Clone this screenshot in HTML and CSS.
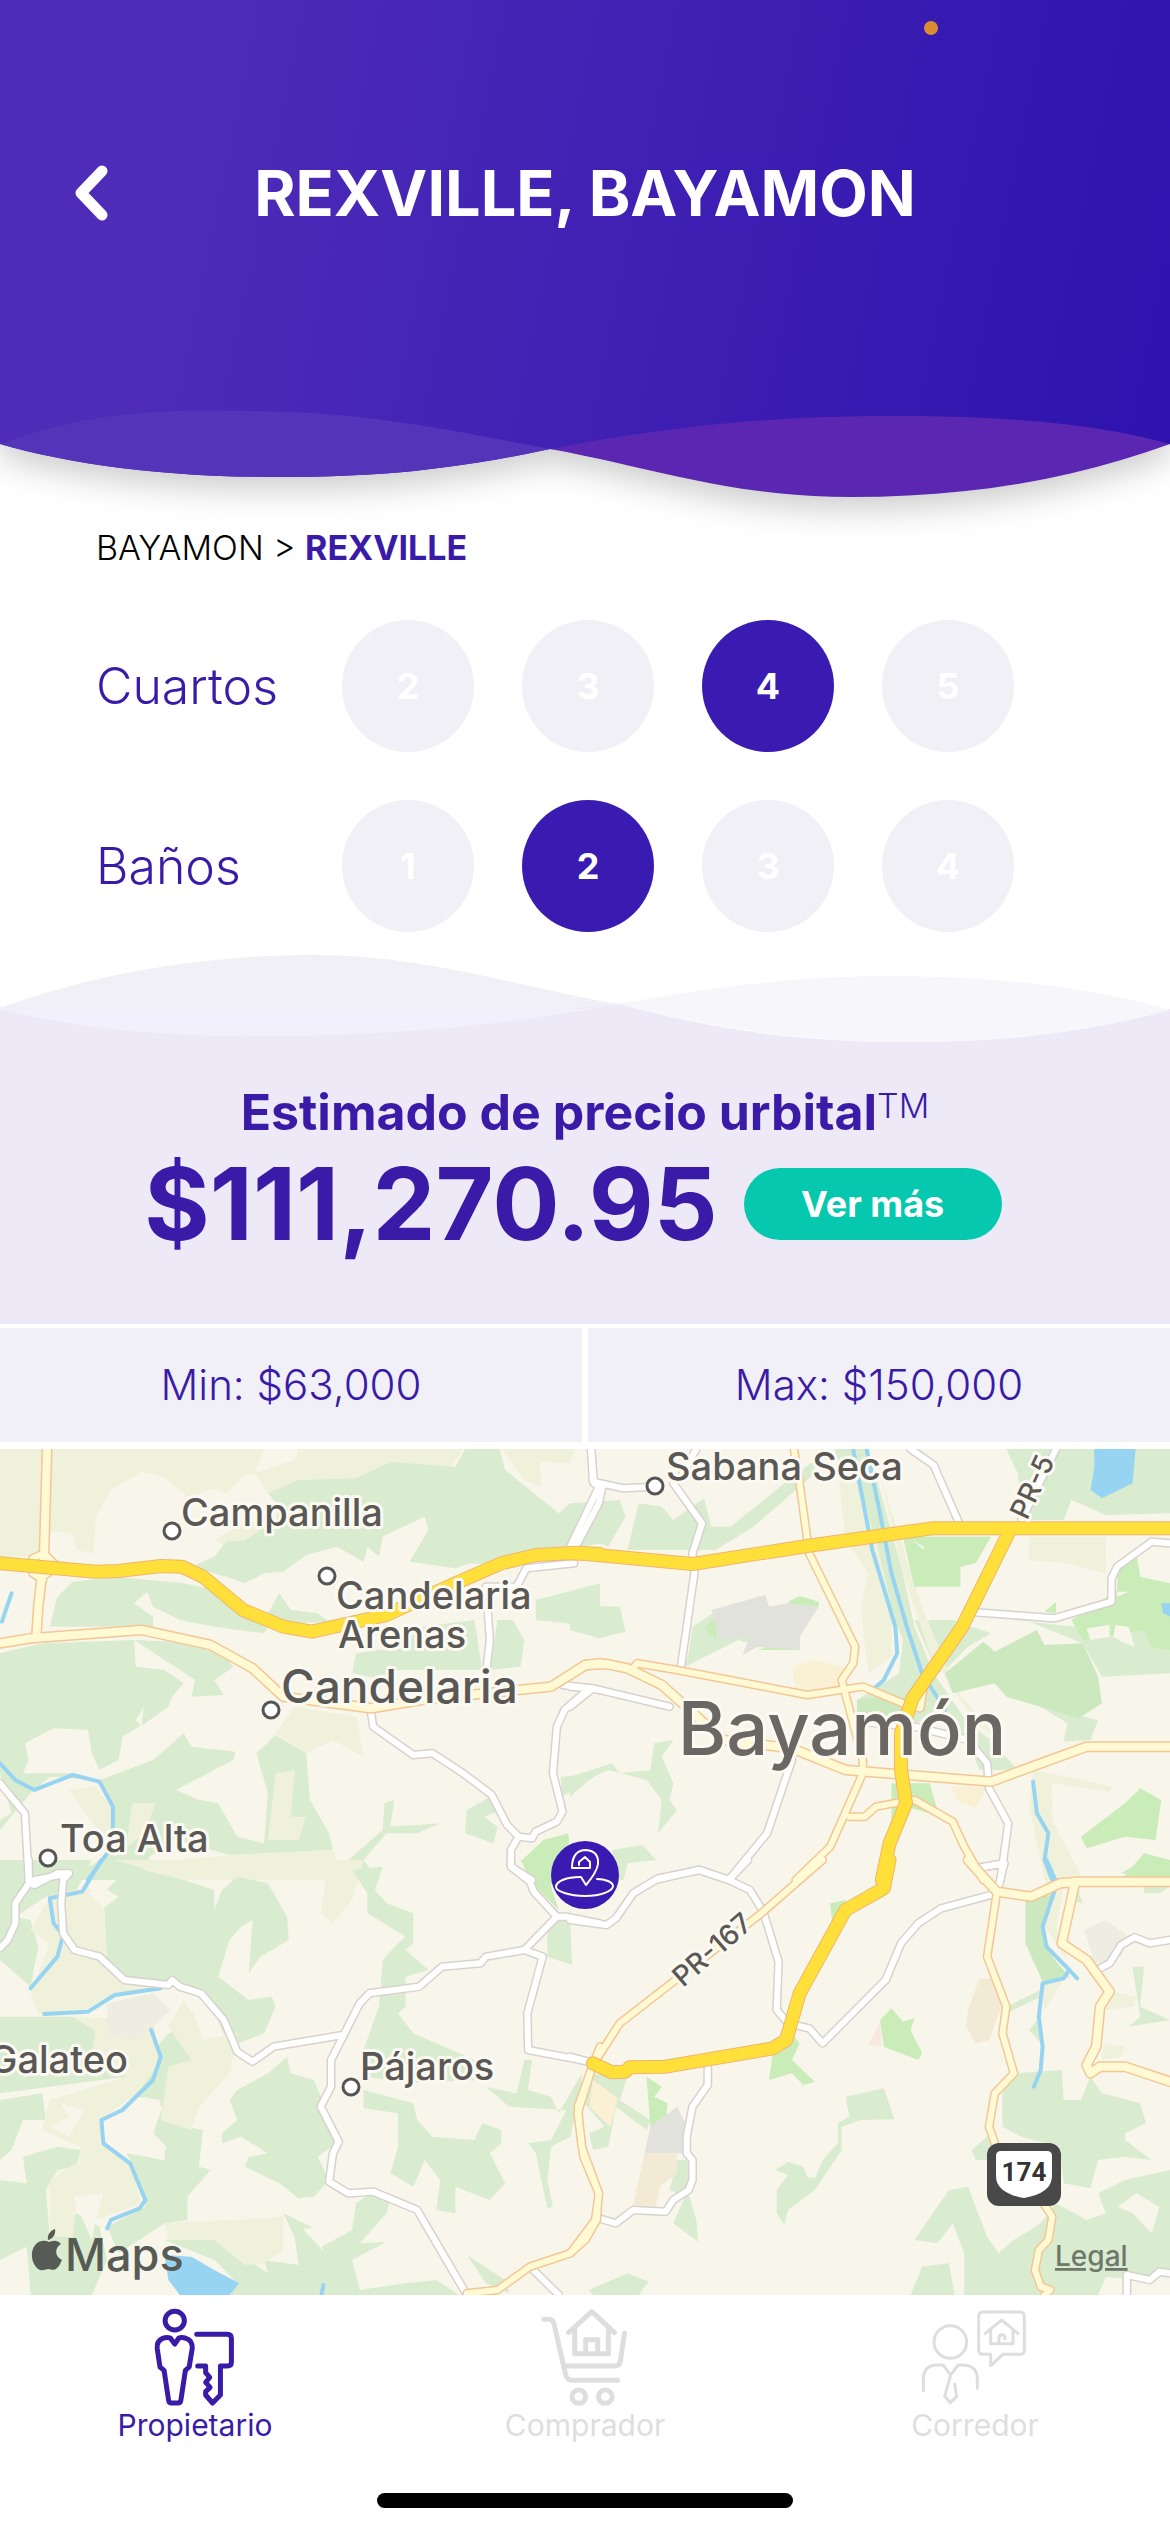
FILE: index.html
```html
<!DOCTYPE html>
<html lang="es">
<head>
<meta charset="utf-8">
<meta name="viewport" content="width=device-width, initial-scale=1">
<title>Rexville, Bayamon</title>
<link rel="stylesheet" href="styles.css">
</head>
<body>
<div class="app">
  <header class="hero">
    <svg class="hero-art" viewBox="0 0 1170 500" preserveAspectRatio="none" aria-hidden="true">
      <defs>
        <linearGradient id="heroFill" gradientUnits="userSpaceOnUse" x1="180" y1="100" x2="1170" y2="300">
          <stop offset="0" stop-color="#4e2cb8"/><stop offset="1" stop-color="#2e13ae"/>
        </linearGradient>
      </defs>
      <path fill="url(#heroFill)" d="M0 0H1170V444L851 470L550 449C450 470 380 477 276 477C160 477 70 464 0 444Z"/>
      <path fill="#5434b8" d="M0 444C100 407 180 410 257 411C370 412 460 432 550 449C450 470 380 477 276 477C160 477 70 464 0 444Z"/>
      <path fill="#5b27b2" d="M550 449C680 424 780 416 895 416C1010 416 1100 424 1170 444C1070 480 970 497 851 497C730 497 650 467 550 449Z"/>
    </svg>
    <span class="recording-dot"></span>
    <div class="hero-bar">
      <button class="back" type="button" aria-label="Volver">
        <svg width="34" height="56" viewBox="0 0 34 56"><path d="M28 6L7 28L28 50" fill="none" stroke="#fff" stroke-width="11" stroke-linecap="round" stroke-linejoin="round"/></svg>
      </button>
      <h1>REXVILLE, BAYAMON</h1>
    </div>
  </header>

  <main>
    <section class="filters">
      <nav class="crumbs" aria-label="Ruta"><a href="#bayamon">BAYAMON</a> &gt; <a class="here" href="#rexville">REXVILLE</a></nav>
      <div class="choice" role="radiogroup" aria-labelledby="cuartos-name">
        <span class="choice-name" id="cuartos-name">Cuartos</span>
        <label><input type="radio" name="cuartos"><span>2</span></label>
        <label><input type="radio" name="cuartos"><span>3</span></label>
        <label><input type="radio" name="cuartos" checked><span>4</span></label>
        <label><input type="radio" name="cuartos"><span>5</span></label>
      </div>
      <div class="choice" role="radiogroup" aria-labelledby="banos-name">
        <span class="choice-name" id="banos-name">Baños</span>
        <label><input type="radio" name="banos"><span>1</span></label>
        <label><input type="radio" name="banos" checked><span>2</span></label>
        <label><input type="radio" name="banos"><span>3</span></label>
        <label><input type="radio" name="banos"><span>4</span></label>
      </div>
    </section>

    <svg class="wave" viewBox="0 0 1170 92" preserveAspectRatio="none" aria-hidden="true">
      <path fill="#ede9f7" d="M0 55H560L620 52C720 80 810 90 907 90C1010 90 1090 80 1170 57V92H0Z"/>
      <path fill="#f1f0f7" d="M0 56C110 16 220 3 313 3C430 3 530 38 618 52L560 58H0Z"/>
      <path fill="#f3f0fd" d="M0 57H585L618 52C490 76 380 84 261 84C150 84 70 75 0 57Z"/>
      <path fill="#f7f6fb" d="M618 52C720 33 810 24 888 24C1010 24 1100 38 1170 58C1090 80 1000 90 907 90C810 90 720 78 618 52Z"/>
    </svg>

    <section class="estimate">
      <h2>Estimado de precio urbital<span>TM</span></h2>
      <div class="price-row">
        <strong>$111,270.95</strong>
        <button type="button" class="more">Ver más</button>
      </div>
    </section>

    <div class="range">
      <p>Min: $63,000</p>
      <p>Max: $150,000</p>
    </div>

    <section class="map" aria-label="Mapa">
      <svg viewBox="0 0 1170 846">
        <defs>
          <g id="minor">
            <path transform="translate(0 -9) scale(.3827 .3333)" d="M0 1030L65 1120 75 1320M1545 27L1552 130 1565 140 1490 320M1500 370L1375 385 1350 440 1270 440 1280 600 1270 700M970 820L975 860 1080 945 1130 940 1210 1000 1285 1065 1325 1155 1355 1190 1390 1195 1400 1175 1455 1145 1470 1115 1445 1000 1455 860 1475 810 1540 745 1470 735M1540 745L1568 750M1355 1190L1335 1230V1280L1390 1320M90 1320L180 1300"/>
            <path transform="translate(570 -9) scale(.3827 .3333)" d="M55 27L60 125 140 145 220 140M85 140L75 190 20 310 0 330M330 27L290 110M270 130L345 250 320 340 325 400 305 560 290 680M890 27L950 75 1015 245M1270 27L1180 240M1040 515L1265 535 1415 485V415L1430 380 1520 305 1568 310M0 740L60 745 260 800M60 745L0 800M580 960L515 1180 415 1320M225 1320L335 1290 415 1320M750 845L900 860 1040 900 1090 970 1095 1045 1145 1150 1125 1320M1060 1285L1135 1270"/>
            <path transform="translate(0 411) scale(.3827 .3333)" d="M75 0V70L40 130V190L20 240 0 265M75 70L90 75 150 40H180L165 60 160 130 165 220 195 270 260 290 325 360 440 375 450 360 470 380 525 400 585 480 620 575 660 605 715 560 895 525M1335 0V20L1385 65 1395 95 1455 170 1370 270 1270 290 1255 310 1155 320 1095 380 965 400 940 430 865 600V680L838 740 885 845 870 880 860 965 910 1000 975 995 1090 1050 1220 1305M1370 270L1418 290 1378 460 1380 570 1540 605M1455 170L1480 170 1568 190M1385 1220L1460 1305"/>
            <path transform="translate(570 411) scale(.3827 .3333)" d="M0 180L95 195 120 175 165 100 230 55 340 30 415 60 470 90 505 155 545 305 540 450 570 490 625 505 660 550 825 360 865 250 910 190 970 145 1115 100M415 60L465 0M1060 25L1135 10 1115 100M1385 325L1410 310 1440 255 1475 232 1515 250 1568 240M0 590L60 610M360 625V675L320 740 305 830V880L320 900V960L310 990 270 1020 250 1055 165 1050 120 1090 75 1075M1455 1305V1245L1515 1260 1540 1235 1568 1240"/>
          </g>
          <g id="secondary">
            <path transform="translate(0 -9) scale(.3827 .3333)" d="M0 610L80 595 370 570 550 615 660 685 740 770 870 790 970 805 1100 780 1440 740 1530 675 1568 670M123 27L115 350 100 500 95 590"/>
            <path transform="translate(570 -9) scale(.3827 .3333)" d="M0 705L40 675 95 672 150 685 240 735 400 900 580 925 720 990 1100 1025 1350 920H1568"/>
            <path transform="translate(570 411) scale(.3827 .3333)" d="M1040 0L1115 95 1205 110 1280 70 1330 65H1568M1320 65L1285 250 1350 300 1410 395 1385 440 1375 560 1350 615 1360 640 1385 620H1450L1568 665"/>
          </g>
          <g id="tertiary">
            <path transform="translate(0 -9) scale(.3827 .3333)" d="M115 340L85 355V400L112 420M115 340L150 380 112 410"/>
            <path transform="translate(570 -9) scale(.3827 .3333)" d="M165 685L175 670 280 690 620 765 765 740 880 795 915 805 925 740M585 27L600 130 625 340 745 620 740 670 710 720 765 960V1000L680 1220 590 1320M730 1130H770L800 1100 870 1085 900 1080 1000 1145 1030 1220 1080 1320"/>
            <path transform="translate(0 411) scale(.3827 .3333)" d="M1568 560L1550 610 1510 740 1520 860 1565 1000 1555 1080 1490 1180 1385 1220 1300 1290 1220 1300"/>
            <path transform="translate(570 411) scale(.3827 .3333)" d="M660 0L500 160 130 490 60 615 20 760 35 890 75 1000 70 1080 40 1140 0 1180M1115 100L1090 290 1140 440 1130 520 1160 640 1110 700 1095 800 1110 850M1240 1035L1260 1070 1250 1140 1225 1170 1215 1230 1230 1280 1255 1290 1240 1305"/>
          </g>
          <g id="primary">
            <path transform="translate(0 -9) scale(.3827 .3333)" d="M0 370L250 395 310 393 420 378 475 380 530 410 635 510 740 560 815 575 1010 525 1190 430 1310 370 1400 345 1510 338 1568 342"/>
            <path transform="translate(570 -9) scale(.3827 .3333)" d="M0 340L50 343 320 372 620 318 945 265H1568M1150 270L1025 560 895 775 865 880V990L878 1090 835 1210 815 1320"/>
            <path transform="translate(570 411) scale(.3827 .3333)" d="M835 0L820 85 720 150 600 400 565 540 530 565 250 620 155 622 145 635 110 637 60 610"/>
          </g>
        </defs>
        <rect class="land" width="1170" height="846"/>

        <g transform="translate(0 -9) scale(.3827 .3333)">
          <path class="scrub" d="M0 27H690L665 100 640 105 590 160 560 145 490 170 430 110 370 95 290 150 250 230 245 340 200 330 190 280 115 270V350H0ZM780 27H1210L1180 80 1020 65 930 115 780 120 700 160 665 100 770 60ZM1310 27H1500L1490 70 1410 65 1415 140 1370 120ZM560 300L640 250 720 240 700 300 600 320Z"/>
          <path class="wood" d="M700 160L780 120 930 115 1020 65 1190 80 1215 27H1305L1320 90 1460 220 1490 190 1560 200 1568 310 1400 350 1340 380 1230 370 1190 385 1070 365 1120 270 1110 230 1000 290 990 350 960 320 950 365 880 320 800 345 740 395 690 400 640 430 590 410 500 380 560 350 590 305 640 300 720 240 730 200ZM130 560L150 470 190 425 300 410 480 430 560 450 620 520 700 560 690 580 560 560 470 540 400 500 385 455 350 490 400 530V560L340 560ZM700 520L730 460 760 510 830 520 860 545 760 550ZM0 640L110 610 350 600 355 680 430 690 480 730 450 770 440 800 380 850 320 890 310 960 260 990 240 940 230 870 140 865 65 910 75 960 60 1000 190 1000 260 1020 400 960 480 880 500 920 615 935 610 960 460 1050 520 1080 570 1090 620 1190 690 1210 700 1060 680 980 670 940 720 885 800 940 810 1080 860 1180 870 1230 600 1245 460 1200 390 1250 370 1320 180 1320 300 1230 290 1090 250 1020 130 1010 80 1060 0 1170V1140L30 1120 0 1000ZM350 600L560 610 610 680 560 720 585 765 500 770 510 720 470 690ZM930 640L1050 620 1100 560 1240 540 1260 690 1040 690 1000 720 920 700ZM1400 480L1568 430V560L1400 540ZM1300 540H1340L1370 600 1360 680 1280 690ZM1465 1010L1568 1000 1470 1070ZM1220 1110L1280 1070 1310 1110 1265 1130 1300 1160 1290 1210 1215 1180ZM1005 1090L1030 1080 1020 1160 1150 1150 1090 1180 1010 1180 950 1260 990 1320H920L900 1270 1000 1170Z"/>
          <path class="land" d="M355 840L375 800 370 860ZM1000 290L1110 230 1070 365 1000 350Z"/>
          <path class="park" d="M1365 1260L1420 1200 1485 1180 1490 1240 1450 1320H1380Z"/>
          <path class="scrub" d="M720 880L770 800 930 830 950 950 870 900 800 940ZM180 1050L250 1040 290 1100V1200L250 1160ZM345 1090L405 1090 380 1180 330 1220ZM720 1000L770 990 760 1130 800 1130 780 1200 700 1200ZM380 1270L600 1245 870 1230 900 1320H370Z"/>
        </g>
        <g transform="translate(0 411) scale(.3827 .3333)">
          <path class="scrub" d="M300 0H950L920 120 870 190 840 160 850 60 720 40 480 60Z"/>
          <path class="wood" d="M270 100L340 20 480 60 560 90V150L580 90 620 50 700 70 750 170 755 240 680 290 650 340 660 180 630 200 600 240 570 350 650 420 710 410 720 440 690 520 600 560 560 460 520 400 450 370 330 350 280 300ZM0 0H240L200 90 120 110 40 170 80 180 100 260 80 380 0 300ZM0 470H190L250 510 240 600 330 600V650L0 700ZM0 720L110 700 120 780 60 780 30 870 0 900ZM60 890L150 860 210 870 200 920 150 930 120 990 130 1130 200 1060 260 1100 280 1200 240 1305H80L70 1160 0 1200V960L70 970ZM340 700L410 560 440 520 500 500 540 560 530 640 440 620V740L480 800 530 810 520 920 550 930 490 1010V1080L430 1090 310 1180 280 1100 380 1040 350 920 330 880 430 900V860L400 830 420 720 360 710ZM620 690L700 640 750 590 760 640 820 660 850 740 880 850 830 890 860 960 820 1010 780 1015 730 970 640 920 650 890 700 880 630 830 580 850V820L620 780 600 720ZM430 1140L560 1130 700 1240 690 1200 780 1215 770 1130 740 1060 820 1105H790L850 1180 840 1160 920 1110 930 1030 970 1000 1020 1020 1010 1060 940 1150 1010 1145 920 1200 940 1290 1060 1270 1140 1260 1200 1305H600L620 1270 560 1200ZM920 30L1000 20 980 90 1010 130 1080 160V250L1060 270 1120 330 1060 350V440L1040 460 1080 520 1240 600 1250 660 1060 670 960 650 950 570 990 440 1000 300 1040 250 1060 230 960 160V100ZM950 690L1080 730 1090 780 1130 830 1240 840 1260 790 1310 810V850L1280 880 1320 970 1280 1020 1190 980V1060L1140 1050 1150 960 1110 900 1080 980 1020 940 1040 860V760L950 745ZM1270 680L1350 700 1370 600H1390L1380 690 1440 710 1460 760 1520 640V680L1490 830 1440 860 1430 960 1445 1040 1430 1045 1400 880 1380 850 1440 840 1480 750 1330 740ZM1430 180H1490L1495 315 1430 290ZM1220 1185L1320 1260 1330 1300 1270 1270Z"/>
          <path class="scrub" d="M130 110L230 80 270 130 280 300 330 360 400 385 300 400 220 450 100 460 80 400 130 250 80 210ZM190 470L400 480 420 600 360 700 270 770 260 850 340 910 370 1030 250 1080 200 1000 210 860 110 810 130 720 330 650 240 600 250 510ZM440 500L480 420 510 470 530 540 620 520 600 640 520 740 500 810 420 780 440 620 500 600ZM130 960L200 910 370 1000 300 1060 200 1020 190 1130H130ZM430 1090L700 1075 740 1070V1170L690 1210 640 1215 560 1140 440 1140Z"/>
          <path class="park" d="M1360 0H1450L1440 80 1460 150 1400 80Z"/>
          <path class="land" d="M350 730L380 710 425 740 400 820 435 860 420 900 320 860V820L355 830ZM130 800L180 770 160 730 220 750 180 830ZM230 100L260 75 310 110 270 145ZM190 1010L270 1000 250 1080 240 1140ZM1060 350L1100 350 1090 390H1060Z"/>
          <path class="paved-soft" d="M280 430L400 400 445 450 400 500 360 540 280 530Z"/>
          <path class="lake" d="M430 1185L500 1190 560 1230 625 1270 600 1305H470L440 1260Z"/>
        </g>
        <g transform="translate(570 -9) scale(.3827 .3333)">
          <path class="wood" d="M0 190L130 180 145 230 100 320 20 280ZM180 190L240 200 270 240 350 175 370 260 420 260 560 130 640 60V100L480 260 380 330H150ZM0 495L130 500 145 575 75 595 0 570ZM310 640L320 560 400 500 600 530 500 620 440 600 300 680ZM690 27H780L870 400 900 560 950 700 1040 850 1100 900 1170 990 1070 990 1040 900 960 830 830 870 750 850V780L860 700 870 600 800 400ZM1140 27H1568V220L1400 225 1310 180 1290 240H1180L1170 100ZM1200 545L1320 560 1568 540V700L1390 710 1340 610ZM900 540L1000 540 1100 580 1040 620 980 690 960 700ZM1230 800L1380 840 1360 900 1290 905 1300 850ZM0 1010L110 970 130 1000 210 990 220 910 270 900 240 950 270 1030 260 1080 280 1110 230 1180 240 1080 200 1020 100 990 60 1010 0 1070ZM110 1230L190 1215 225 1260 150 1270 140 1320H120Z"/>
          <path class="scrub" d="M700 80L720 300 780 400 760 500 780 700 840 650V500L800 300 740 100ZM810 100L870 400 940 640 1060 850 1120 900 1010 750 920 500 850 250ZM1200 290H1400V400L1300 370 1200 360ZM1210 990L1420 1040 1410 1055 1260 1030V1140L1340 1320H1240L1200 1100Z"/>
          <path class="forest" d="M980 700L1080 605 1110 635 1220 570 1240 615 1340 610 1380 710 1390 790 1330 835 1140 770 1110 730 1000 760ZM750 780L820 770 870 810 860 850H750Z"/>
          <path class="park" d="M870 290H1100L1060 370 1020 380V440H900ZM1310 540L1430 450V380L1480 340 1490 410 1568 430V630L1520 620 1500 570 1340 600ZM1240 515L1270 485V520ZM1335 1190L1450 1090 1490 1045 1545 1080 1530 1200 1450 1190 1350 1225ZM1440 1320L1500 1240 1568 1260V1320ZM840 1030H940L960 1110 1000 1140 880 1100 840 1160ZM350 560L400 520 380 600ZM490 630L600 590V630ZM570 485L600 468 650 485V500H570Z"/>
          <path class="land" d="M1350 565L1410 555V590L1360 600ZM1425 555L1460 560 1475 620 1450 610 1420 590ZM1430 455H1460L1430 470ZM895 300L925 320V330Z"/>
          <path class="paved" d="M370 510L510 465 520 500 570 490 650 500 600 590V630L490 620 450 645 470 590 390 600Z"/>
          <path class="sand" d="M580 680L640 660 710 680 720 750 590 750ZM1000 1040H1090L1060 1105 1010 1080Z"/>
          <path class="lake" d="M1370 27H1478L1470 130 1390 175 1360 150 1370 80ZM1545 490H1568V530L1550 520Z"/>
        </g>
        <g transform="translate(570 411) scale(.3827 .3333)">
          <path class="scrub" d="M1245 60L1290 80 1270 200 1300 300 1240 200ZM1400 390L1480 410 1470 440 1400 450ZM1395 550L1450 560 1440 590 1390 600ZM1230 370L1290 360 1240 450Z"/>
          <path class="forest" d="M1190 120L1230 110 1270 100 1235 200 1260 290 1305 350 1235 365 1190 250Z"/>
          <path class="wood" d="M1150 435L1230 390V410L1150 455ZM1200 510L1220 480 1230 550ZM1130 700L1160 640 1285 630 1290 720 1335 720 1360 650 1390 700 1490 730 1505 790 1450 820V840L1520 900 1450 890 1380 900 1360 985 1290 970 1280 860 1180 830 1130 800ZM1050 870L1100 820V900H1060ZM900 1140L990 990 1040 980 1060 1040 1090 1130 1120 1180 1160 1140 1230 1090 1270 1030 1350 1080 1400 1060 1380 1000 1450 960 1568 930V1240L1480 1260 1400 1250 1380 1305H1030V1180L1000 1090 960 1150ZM890 1305L920 1220 990 1210 1005 1305ZM50 1290L150 1240 205 1265 180 1305H60ZM535 930L570 905 610 920 620 950 640 955 660 900 700 850V790L730 770 720 710 820 685 848 778 760 780 710 800V870L640 990 570 1050 560 1095 540 1060V990L570 945ZM1470 320H1500L1490 440 1568 480 1460 500 1490 470ZM40 640L150 650 130 720 210 780 200 810 120 740 100 860 60 870 50 820 90 800 30 720ZM280 900H320L310 1000 330 1080 335 1145 270 1090 300 1010 260 990ZM0 230V300ZM1320 70L1340 130 1310 120ZM1500 80H1568L1540 100H1500Z"/>
          <path class="land" d="M1430 1040L1480 1000 1540 1040 1520 1120 1470 1060ZM1300 980L1370 1000 1300 1010Z"/>
          <path class="park" d="M810 480L840 445 870 485 900 475 890 510 920 580 910 600 820 560ZM530 580L560 490 600 550 580 600 640 665 610 675 580 640 520 660ZM200 650L240 680 220 710 255 730 250 790 210 800ZM680 130L720 120 700 190H685ZM1440 40L1500 0H1568V50Z"/>
          <path class="paved" d="M210 800L280 740 305 800 300 880H195Z"/>
          <path class="clay" d="M195 880H280V940L235 980 225 1040 165 1035ZM1040 450L1070 355 1120 360 1130 430 1095 540 1060 550 1035 500Z"/>
          <path class="sand" d="M60 660L125 715 105 800 50 740Z"/>
          <path class="rose" d="M780 555L810 490 815 560Z"/>
          <path class="paved-soft" d="M1345 210L1400 180 1460 230 1440 290 1370 310Z"/>
        </g>

        <g class="river">
          <path transform="translate(0 -9) scale(.3827 .3333)" d="M0 970L40 1020 90 1050 190 1005 260 1025 295 1100V1180M280 1240L230 1320M30 460L5 545"/>
          <path transform="translate(0 411) scale(.3827 .3333)" d="M265 0L215 95 130 115 140 190 165 225 150 290 80 385M115 462L230 455 300 405 420 385M395 510L420 590 400 660 320 750 265 780 270 850 340 910 380 1020 365 1045 290 1080 280 1105M845 1275L840 1305"/>
          <path transform="translate(570 -9) scale(.3827 .3333)" d="M740 27L760 150 790 330 850 560 855 640 820 720 790 750M775 27L810 220 840 400 880 560 920 700 980 810M1210 1025L1220 1120 1250 1180 1240 1260 1260 1320"/>
          <path transform="translate(570 411) scale(.3827 .3333)" d="M1245 0L1272 70 1235 200 1245 260 1305 330 1325 355M1305 330L1290 355 1235 370 1225 470 1235 560 1230 630 1212 680"/>
        </g>
        <use href="#minor" class="road minor-edge"/>
        <use href="#minor" class="road minor-fill"/>
        <use href="#tertiary" class="road tertiary-edge"/>
        <use href="#secondary" class="road secondary-edge"/>
        <use href="#tertiary" class="road tertiary-fill"/>
        <use href="#secondary" class="road secondary-fill"/>
        <use href="#primary" class="road primary-edge"/>
        <use href="#primary" class="road primary-fill"/>

        <g class="town-dot">
          <circle cx="172" cy="82" r="8"/><circle cx="327" cy="127" r="8"/><circle cx="271" cy="261" r="8"/>
          <circle cx="48" cy="409" r="8"/><circle cx="655" cy="37" r="8"/><circle cx="351" cy="638" r="8"/>
        </g>
        <g class="town">
          <text x="181" y="77">Campanilla</text>
          <text x="336" y="160">Candelaria<tspan x="338" dy="39">Arenas</tspan></text>
          <text x="60" y="403">Toa Alta</text>
          <text x="666" y="31">Sabana Seca</text>
          <text x="360" y="631">Pájaros</text>
          <text x="128" y="624" text-anchor="end">Galateo</text>
          <text class="town-mid" x="281" y="254">Candelaria</text>
          <text class="town-big" x="842" y="306" text-anchor="middle">Bayamón</text>
          <text class="route" transform="translate(1027 72) rotate(-65)">PR-5</text>
          <text class="route" transform="translate(683 539) rotate(-41)">PR-167</text>
        </g>

        <g transform="translate(987 694)">
          <rect width="74" height="63" rx="12" fill="#484848"/>
          <path fill="#fff" d="M14 8H60Q65 8 65 13V33Q65 50 37 55Q9 50 9 33V13Q9 8 14 8Z"/>
          <text class="shield" x="37" y="38" text-anchor="middle">174</text>
        </g>

        <g transform="translate(585 426)">
          <circle r="34" fill="#3a1bb1"/>
          <path class="pin-line" d="M-5 2H-4L1 10Q12 -3 13 -11Q14 -24 1 -25Q-12 -25 -13 -9V-7H5V-13L0 -18 -6 -13V-10M-5 2C-18 2 -29 6 -29 12C-29 16 -16 21 0 21C16 21 28 16 28 11C28 7 20 4 12 4"/>
        </g>

        <g class="credit">
          <path d="M49 793C45 791 40 791 36 795C30 801 31 812 36 818C40 823 43 821 48 820C53 821 55 822 59 817L62 811C55 808 54 799 61 795C57 790 52 792 49 793ZM48 791C47 786 50 782 55 780C56 785 53 790 48 791Z"/>
          <text x="65" y="822">Maps</text>
        </g>
        <a href="#legal"><text class="legal" x="1055" y="817">Legal</text></a>
      </svg>
    </section>
  </main>

  <nav class="tabs" aria-label="Secciones">
    <a class="tab active" href="#propietario">
      <svg width="90" height="100" viewBox="145 50 262 300" preserveAspectRatio="none" aria-hidden="true">
        <g stroke-width="5">
          <ellipse cx="217" cy="91" rx="28" ry="28"/>
          <path d="M217 161L204 143Q194 139 182 144Q164 152 166 174L174 230 186 240 199 329Q200 338 208 338H226Q234 338 235 329L248 240 259 230 268 174Q269 150 250 144Q238 139 229 143Z"/>
          <path d="M281 132H370Q382 132 382 144V216Q382 227 370 227H350V314L327 338 307 314V304L320 291 307 276 319 261 307 247V227H284"/>
        </g>
      </svg>
      <span>Propietario</span>
    </a>
    <a class="tab" href="#comprador">
      <svg width="90" height="100" viewBox="1277 50 262 300" preserveAspectRatio="none" aria-hidden="true">
        <g stroke-width="5">
          <path d="M1288 87H1303Q1314 87 1318 101L1350 246Q1354 270 1370 270H1503M1352 227H1495Q1508 227 1511 212L1523 129M1360 127L1428 64 1494 127M1378 120V190H1476V120M1410 190V148H1445V190"/>
          <ellipse cx="1390" cy="319" rx="20" ry="20"/><ellipse cx="1467" cy="319" rx="20" ry="20"/>
        </g>
      </svg>
      <span>Comprador</span>
    </a>
    <a class="tab" href="#corredor">
      <svg width="112" height="100" viewBox="177 50 336 300" preserveAspectRatio="none" aria-hidden="true">
        <g stroke-width="3">
          <circle cx="271" cy="155" r="49"/>
          <path d="M190 302V265Q192 224 232 224H249L272 254 294 224H310Q352 226 352 266V294M272 254L254 318 271 337 290 318 284 281M370 65H480Q493 65 493 79V178Q493 192 480 192H429L392 226V192H370Q356 192 356 178V79Q356 65 370 65ZM375 130L425 89 474 130M392 118V160H459V118M417 160V143Q417 133 426 133T435 145"/>
        </g>
      </svg>
      <span>Corredor</span>
    </a>
  </nav>
  <div class="home-bar"></div>
</div>
</body>
</html>
```
FILE: styles.css
```css
* { box-sizing: border-box; }

body {
  margin: 0;
  background: #fff;
  color: #3a1ba8;
  font-family: Inter, "Liberation Sans", sans-serif;
}

h1, h2, p { margin: 0; }
button { border: 0; padding: 0; background: none; font-family: inherit; cursor: pointer; }
a { color: inherit; text-decoration: none; }

.app { display: flex; flex-direction: column; min-height: 100vh; }

/* Header */
.hero { position: relative; height: 500px; }
.hero-art {
  position: absolute;
  inset: 0;
  width: 100%;
  height: 100%;
  overflow: visible;
  filter: drop-shadow(0 12px 16px rgba(0, 0, 0, .2));
}
.recording-dot {
  position: absolute;
  top: 21px;
  left: 79%;
  width: 14px;
  height: 14px;
  border-radius: 50%;
  background: #d98c34;
}
.hero-bar {
  position: relative;
  display: grid;
  grid-template-columns: 108px 1fr 108px;
  align-items: center;
  padding-top: 153px;
}
.back { display: flex; justify-content: flex-end; }
.hero-bar h1 {
  color: #fff;
  font-size: 63px;
  font-weight: 700;
  line-height: 80px;
  text-align: center;
}

/* Filters */
.filters { padding: 28px 96px 20px; }
.crumbs { color: #000; font-size: 34px; font-weight: 300; line-height: 40px; }
.crumbs .here { color: #3a1ba8; font-weight: 700; }
.choice { display: flex; align-items: center; gap: 48px; margin-top: 52px; }
.choice + .choice { margin-top: 48px; }
.choice-name { width: 198px; font-size: 50px; font-weight: 300; }
.choice label { position: relative; cursor: pointer; }
.choice input { position: absolute; inset: 0; width: 100%; height: 100%; margin: 0; opacity: 0; }
.choice label span {
  display: grid;
  place-items: center;
  width: 132px;
  height: 132px;
  border-radius: 50%;
  background: #f1f0f7;
  color: #fff;
  font-size: 36px;
  font-weight: 700;
}
.choice input:checked + span { background: #3a1bb1; }

/* Estimate */
.wave { display: block; width: 100%; height: 92px; }
.estimate { padding: 40px 0 56px; background: #ede9f7; text-align: center; }
.estimate h2 { font-size: 50px; font-weight: 700; line-height: 56px; }
.estimate h2 span { font-size: 34px; font-weight: 300; line-height: 0; vertical-align: 12px; }
.price-row { display: flex; justify-content: center; align-items: center; gap: 26px; padding-right: 24px; }
.price-row strong { font-size: 100px; font-weight: 700; line-height: 128px; }
.more {
  width: 258px;
  height: 72px;
  border-radius: 36px;
  background: #06c8ae;
  color: #fff;
  font-size: 36px;
  font-weight: 700;
}
.range { display: grid; grid-template-columns: 1fr 1fr; gap: 6px; padding: 4px 0 7px; }
.range p {
  background: #f1f0f7;
  font-size: 42px;
  font-weight: 300;
  line-height: 114px;
  text-align: center;
}

/* Map */
.map svg { display: block; width: 100%; height: auto; }
.land { fill: #f8f5ea; }
.wood { fill: #daecd0; }
.scrub { fill: #eff1da; }
.park { fill: #c9ecb9; }
.forest { fill: #cbe8bf; }
.paved { fill: #e2e2dc; }
.paved-soft { fill: #eeede2; }
.sand { fill: #faf0d4; }
.clay { fill: #f3ead6; }
.rose { fill: #f8e8e0; }
.lake { fill: #97d4f1; }
.road path, .river path, defs path { vector-effect: non-scaling-stroke; }
.river { fill: none; stroke: #97d4f1; stroke-width: 4; stroke-linejoin: round; stroke-linecap: round; }
.road { fill: none; stroke-linejoin: round; stroke-linecap: round; }
.minor-edge { stroke: #d8d2ce; stroke-width: 9; }
.minor-fill { stroke: #fff; stroke-width: 6; }
.tertiary-edge { stroke: #f3c795; stroke-width: 9; }
.tertiary-fill { stroke: #fffad3; stroke-width: 6; }
.secondary-edge { stroke: #f3c795; stroke-width: 11; }
.secondary-fill { stroke: #fffad3; stroke-width: 8; }
.primary-edge { stroke: #f0b56e; stroke-width: 14; }
.primary-fill { stroke: #ffe03a; stroke-width: 12; }
.town-dot { fill: #fff; stroke: #555; stroke-width: 3; }
.town {
  fill: #5a5855;
  stroke: #fbf9f1;
  stroke-width: 6;
  stroke-linejoin: round;
  paint-order: stroke;
  font-size: 38px;
  font-weight: 500;
}
.town-mid { font-size: 46px; }
.town-big { font-size: 74px; fill: #6b6763; }
.route { font-size: 28px; }
.shield { fill: #333; font: 700 26px "Liberation Sans Narrow", Roboto, sans-serif; }
.pin-line { fill: none; stroke: #fff; stroke-width: 2; stroke-linejoin: round; stroke-linecap: round; }
.credit { fill: #575b55; font-size: 45px; font-weight: 500; }
.legal { fill: #6f786b; font-size: 28px; font-weight: 500; text-decoration: underline; }

/* Tab bar */
.tabs { display: grid; grid-template-columns: repeat(3, 1fr); padding-top: 12px; }
.tab { display: flex; flex-direction: column; align-items: center; color: #dedede; font-size: 30px; line-height: 36px; }
.tab.active { color: #3a1ba8; }
.tab svg { fill: none; stroke: currentColor; stroke-linecap: round; stroke-linejoin: round; }
.tab svg * { vector-effect: non-scaling-stroke; }
.home-bar { width: 416px; height: 15px; margin: 50px auto 24px; border-radius: 8px; background: #000; }
```
